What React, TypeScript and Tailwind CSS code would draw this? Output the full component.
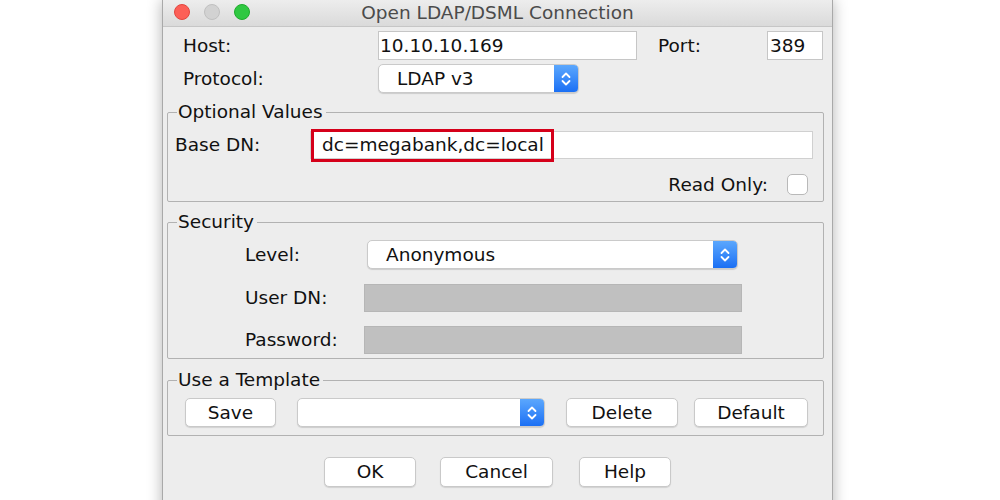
import React from "react";

const Chevrons = () => (
  <svg width="12" height="18" viewBox="0 0 12 18" fill="none" stroke="white" strokeWidth="1.8" strokeLinecap="round" strokeLinejoin="round">
    <path d="M2.5 7 L6 3.5 L9.5 7" />
    <path d="M2.5 11 L6 14.5 L9.5 11" />
  </svg>
);

function Combo({ cls, text }: { cls: string; text?: string }) {
  return (
    <div className={`flex h-[29px] rounded-[5px] bg-white border border-[#cacaca] shadow-[0_1px_1px_rgba(0,0,0,0.14)] overflow-hidden ${cls}`}>
      <div className="flex-1 flex items-center pl-[18px] text-[#111]">{text}</div>
      <div className="w-[24px] flex items-center justify-center bg-gradient-to-b from-[#5ba7fd] to-[#1a6ff4]">
        <Chevrons />
      </div>
    </div>
  );
}

function Btn({ cls, label }: { cls: string; label: string }) {
  return (
    <div className={`flex items-center justify-center rounded-[5px] bg-white border border-[#c9c9c9] shadow-[0_1px_1px_rgba(0,0,0,0.12)] text-[#111] ${cls}`}>
      {label}
    </div>
  );
}

export default function App() {
  return (
    <div className="w-[1000px] h-[500px] bg-white overflow-hidden font-['DejaVu_Sans',sans-serif] text-[18.5px] leading-[22px] text-[#111]">
      <div className="ml-[162px] w-[671px] h-[520px] bg-[#ededed] border border-t-0 border-[#a9a9a9] shadow-[0_0_14px_rgba(0,0,0,0.3)] flex flex-col">
        {/* title bar */}
        <div className="h-[27px] grid grid-cols-[1fr_auto_1fr] items-center bg-gradient-to-b from-[#ededed] to-[#dadada] border-b border-[#c6c6c6]">
          <div className="flex items-center gap-[14px] pl-[11px] -mt-[2px]">
            <div className="w-[16px] h-[16px] rounded-full bg-[#fc5f57] border border-[#e2463f]" />
            <div className="w-[16px] h-[16px] rounded-full bg-[#d2d2d2] border border-[#c0c0c0]" />
            <div className="w-[16px] h-[16px] rounded-full bg-[#2fc841] border border-[#1fab2c]" />
          </div>
          <div className="text-[#4b4b4b]">Open LDAP/DSML Connection</div>
          <div />
        </div>

        {/* Host row */}
        <div className="mt-[4px] h-[29px] flex items-center pl-[20px]">
          <div className="w-[195px]">Host:</div>
          <div className="w-[259px] h-[29px] bg-white border border-[#c6c6c6] flex items-center pl-[1px]">10.10.10.169</div>
          <div className="ml-[21px] w-[109px]">Port:</div>
          <div className="w-[56px] h-[29px] bg-white border border-[#c6c6c6] flex items-center pl-[2px]">389</div>
        </div>

        {/* Protocol row */}
        <div className="mt-[4px] h-[29px] flex items-center pl-[20px]">
          <div className="w-[195px]">Protocol:</div>
          <Combo cls="w-[201px]" text="LDAP v3" />
        </div>

        {/* Optional Values */}
        <fieldset className="mt-[8px] ml-[4px] w-[657px] border border-[#b2b2b2] rounded-[2px] pb-[6px]">
          <legend className="ml-[9px] px-[1px] pr-[3px]">Optional Values</legend>
          <div className="mt-[8px] h-[28px] flex items-center pl-[7px]">
            <div className="w-[135px]">Base DN:</div>
            <div className="relative w-[503px] h-[28px] bg-white border border-[#d0d0d0] flex items-center pl-[11px]">
              dc=megabank,dc=local
              <div className="absolute left-0 -top-[3px] w-[243px] h-[33px] border-[3px] border-[#d5001a]" />
            </div>
          </div>
          <div className="mt-[15px] h-[21px] flex items-center justify-end pr-[15px]">
            <div>Read Only:</div>
            <div className="ml-[19px] w-[21px] h-[21px] rounded-[5px] bg-white border border-[#b9b9b9]" />
          </div>
        </fieldset>

        {/* Security */}
        <fieldset className="mt-[9px] ml-[4px] w-[657px] border border-[#b2b2b2] rounded-[2px] pb-[4px]">
          <legend className="ml-[9px] px-[1px] pr-[3px]">Security</legend>
          <div className="mt-[7px] h-[29px] flex items-center pl-[77px]">
            <div className="w-[122px]">Level:</div>
            <Combo cls="w-[371px]" text="Anonymous" />
          </div>
          <div className="mt-[15px] h-[28px] flex items-center pl-[77px]">
            <div className="w-[119px]">User DN:</div>
            <div className="w-[378px] h-[28px] bg-[#c0c0c0] border border-[#b6b6b6]" />
          </div>
          <div className="mt-[14px] h-[28px] flex items-center pl-[77px]">
            <div className="w-[119px]">Password:</div>
            <div className="w-[378px] h-[28px] bg-[#c0c0c0] border border-[#b6b6b6]" />
          </div>
        </fieldset>

        {/* Use a Template */}
        <fieldset className="mt-[10px] ml-[4px] w-[657px] border border-[#b2b2b2] rounded-[2px] pb-[8px]">
          <legend className="ml-[9px] px-[1px] pr-[3px]">Use a Template</legend>
          <div className="mt-[7px] h-[29px] flex items-center pl-[17px]">
            <Btn cls="w-[91px] h-[29px]" label="Save" />
            <Combo cls="ml-[21px] w-[248px]" />
            <Btn cls="ml-[21px] w-[112px] h-[29px]" label="Delete" />
            <Btn cls="ml-[16px] w-[114px] h-[29px]" label="Default" />
          </div>
        </fieldset>

        {/* Bottom buttons */}
        <div className="mt-[21px] flex justify-center">
          <Btn cls="w-[92px] h-[30px]" label="OK" />
          <Btn cls="ml-[24px] w-[113px] h-[30px]" label="Cancel" />
          <Btn cls="ml-[26px] w-[92px] h-[30px]" label="Help" />
        </div>
      </div>
    </div>
  );
}
